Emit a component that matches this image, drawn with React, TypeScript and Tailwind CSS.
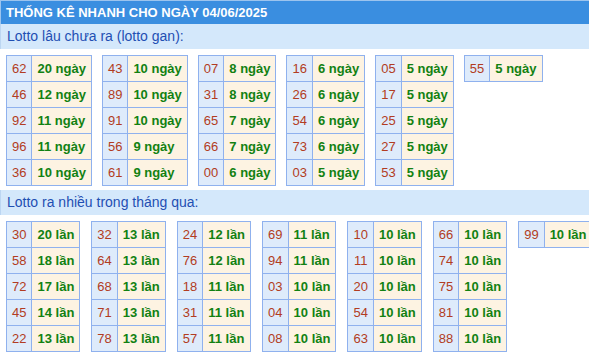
import React from "react";

type Row = [string, string];

const gan: Row[][] = [
  [["62", "20"], ["46", "12"], ["92", "11"], ["96", "11"], ["36", "10"]],
  [["43", "10"], ["89", "10"], ["91", "10"], ["56", "9"], ["61", "9"]],
  [["07", "8"], ["31", "8"], ["65", "7"], ["66", "7"], ["00", "6"]],
  [["16", "6"], ["26", "6"], ["54", "6"], ["73", "6"], ["03", "5"]],
  [["05", "5"], ["17", "5"], ["25", "5"], ["27", "5"], ["53", "5"]],
  [["55", "5"]],
];

const nhieu: Row[][] = [
  [["30", "20"], ["58", "18"], ["72", "17"], ["45", "14"], ["22", "13"]],
  [["32", "13"], ["64", "13"], ["68", "13"], ["71", "13"], ["78", "13"]],
  [["24", "12"], ["76", "12"], ["18", "11"], ["31", "11"], ["57", "11"]],
  [["69", "11"], ["94", "11"], ["03", "10"], ["04", "10"], ["08", "10"]],
  [["10", "10"], ["11", "10"], ["20", "10"], ["54", "10"], ["63", "10"]],
  [["66", "10"], ["74", "10"], ["75", "10"], ["81", "10"], ["88", "10"]],
  [["99", "10"]],
];

function Box({ rows, unit }: { rows: Row[]; unit: string }) {
  return (
    <div className="shrink-0 grid grid-cols-[auto_auto] border-l border-t border-[#8fb1ee] self-start whitespace-nowrap">
      {rows.map(([n, v], i) => (
        <React.Fragment key={i}>
          <div className="h-[26px] px-[5px] flex items-center justify-center border-r border-b border-[#8fb1ee] bg-[#deebfb] text-[#b23c22]">
            {n}
          </div>
          <div className="h-[26px] px-[5px] flex items-center border-r border-b border-[#8fb1ee] bg-[#fdf3e2] text-[#128112] font-bold">
            {v} {unit}
          </div>
        </React.Fragment>
      ))}
    </div>
  );
}

export default function App() {
  return (
    <div className="w-[589px] h-[354px] bg-white font-['Liberation_Sans',Arial,sans-serif] overflow-hidden">
      <div className="h-[24px] bg-[#3a8ee0] border-l border-t border-[#9cc4ee] pl-[5px] flex items-center text-white font-bold text-[13px]">
        THỐNG KÊ NHANH CHO NGÀY 04/06/2025
      </div>
      <div className="h-[25px] bg-[#d4e8fb] border-l border-[#bcd6f2] pl-[6px] flex items-center text-[#1f4fb3] text-[14px]">
        Lotto lâu chưa ra (lotto gan):
      </div>
      <div className="flex gap-x-[10px] pl-[6px] pt-[6px] pb-[4px] text-[13px]">
        {gan.map((t, i) => (
          <Box key={i} rows={t} unit="ngày" />
        ))}
      </div>
      <div className="h-[25px] bg-[#d4e8fb] border-l border-[#bcd6f2] pl-[6px] flex items-center text-[#1f4fb3] text-[14px]">
        Lotto ra nhiều trong tháng qua:
      </div>
      <div className="flex gap-x-[11px] pl-[6px] pt-[6px] text-[13px]">
        {nhieu.map((t, i) => (
          <Box key={i} rows={t} unit="lần" />
        ))}
      </div>
    </div>
  );
}
